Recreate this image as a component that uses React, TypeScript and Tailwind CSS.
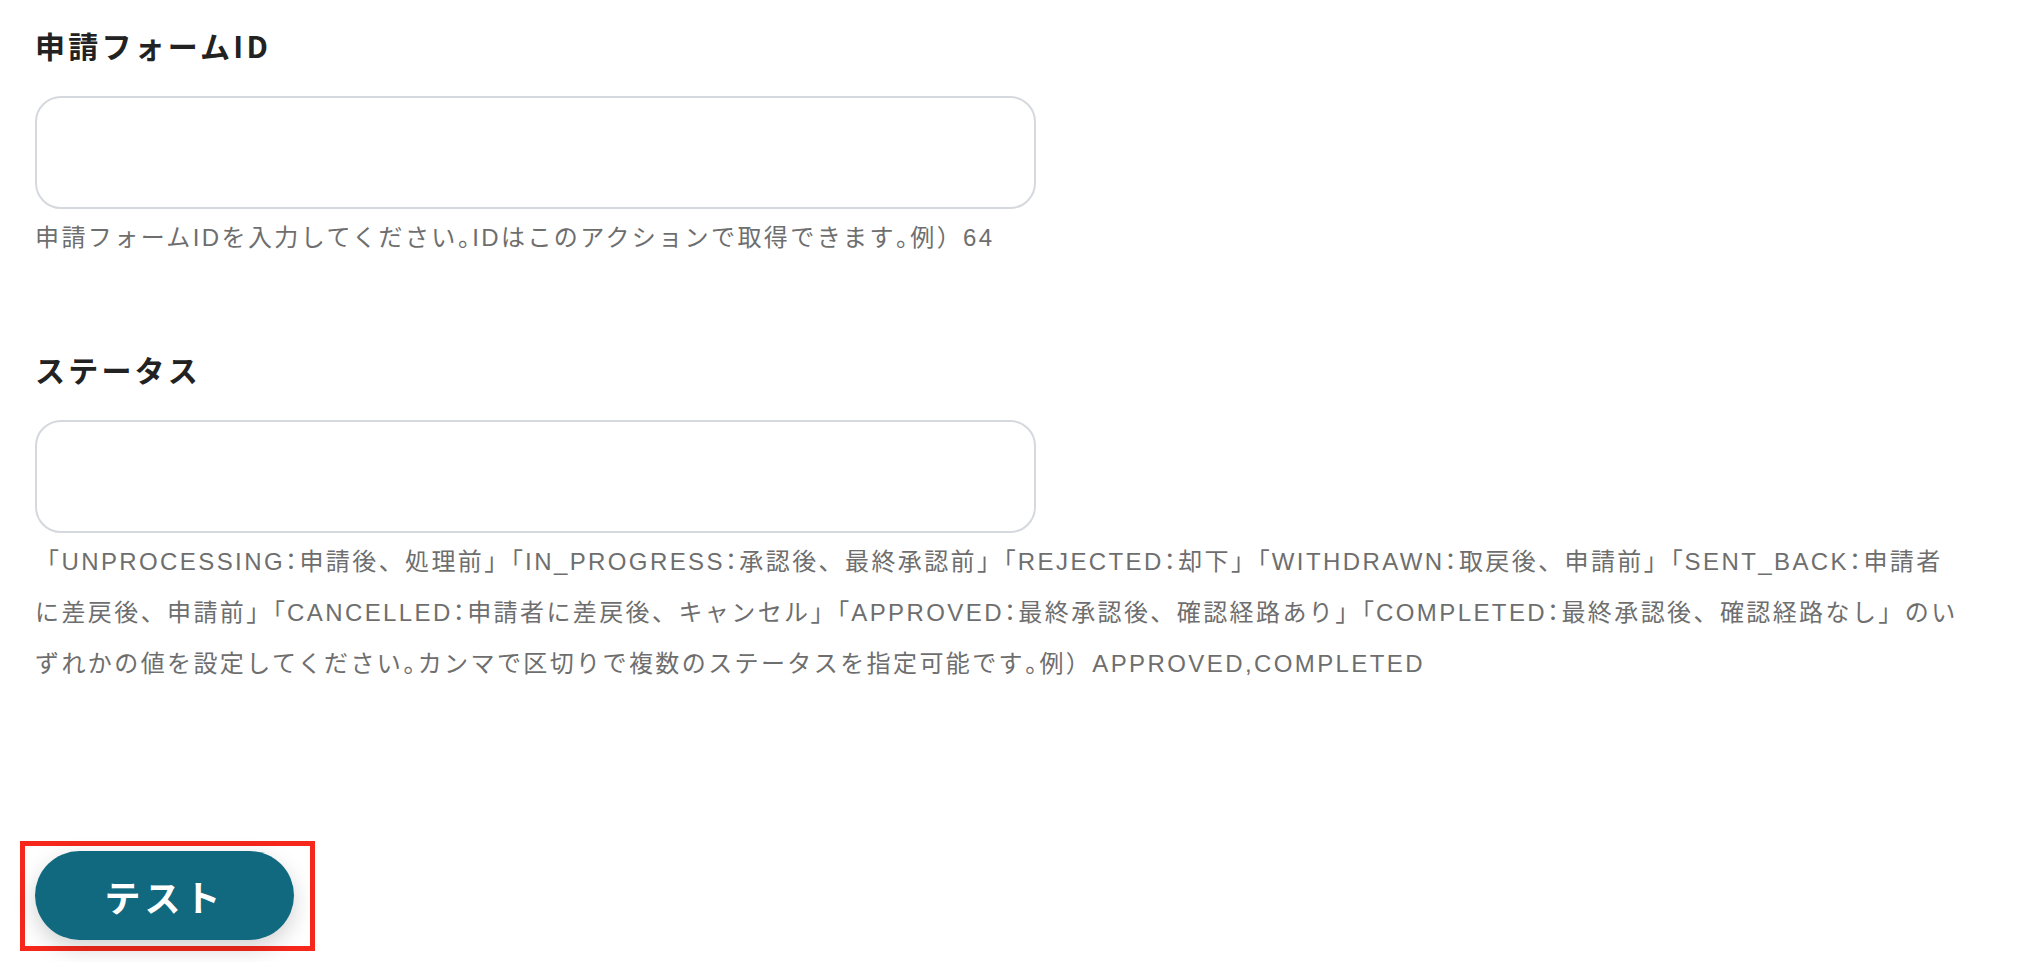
import React from 'react';

// the original page trims some full-width punctuation (colon, period, 」「 pairs) — use palt on those glyphs only
const Punct = ({ text }: { text: string }) => {
  const chars = Array.from(text);
  return (
    <>
      {chars.map((c, i) => {
        const trim = c === '：' || c === '。' || (c === '「' && chars[i - 1] === '」');
        return trim ? (
          <span key={i} className="[font-feature-settings:'palt']">
            {c}
          </span>
        ) : (
          <React.Fragment key={i}>{c}</React.Fragment>
        );
      })}
    </>
  );
};

const statusLines = [
  '「UNPROCESSING：申請後、処理前」「IN_PROGRESS：承認後、最終承認前」「REJECTED：却下」「WITHDRAWN：取戻後、申請前」「SENT_BACK：申請者',
  'に差戻後、申請前」「CANCELLED：申請者に差戻後、キャンセル」「APPROVED：最終承認後、確認経路あり」「COMPLETED：最終承認後、確認経路なし」のい',
  'ずれかの値を設定してください。カンマで区切りで複数のステータスを指定可能です。例）APPROVED,COMPLETED',
];

function Field({ label, lines, className }: { label: string; lines: string[]; className?: string }) {
  return (
    <div className={className}>
      <label className="block text-[30px] leading-[40px] font-semibold tracking-[3.2px] text-[#222] font-['Noto_Sans_CJK_JP',sans-serif]">
        {label}
      </label>
      <input
        type="text"
        className="mt-[31px] block w-[1001px] h-[113px] rounded-[26px] border-2 border-[#d5d9de] bg-white px-6 outline-none"
      />
      <p className="mt-[3px] whitespace-nowrap text-[24px] leading-[51px] tracking-[2.4px] text-[#6e6e6e] font-['Liberation_Sans','Noto_Sans_CJK_JP',sans-serif]">
        {lines.map((line, i) => (
          <React.Fragment key={i}>
            {i > 0 && <br />}
            <Punct text={line} />
          </React.Fragment>
        ))}
      </p>
    </div>
  );
}

export default function App() {
  return (
    <div className="min-h-[962px] w-[2042px] bg-white pl-[35px] pt-[25px]">
      <Field label="申請フォームID" lines={['申請フォームIDを入力してください。IDはこのアクションで取得できます。例）64']} />
      <Field label="ステータス" lines={statusLines} className="mt-[86px]" />

      <div className="mt-[152px] -ml-[15px] inline-block border-[5px] border-[#f5281b] pl-[10px] pr-[16px] pt-[5px] pb-[6px]">
        <button className="flex h-[89px] w-[259px] items-center justify-center rounded-full bg-[#10697f] text-[36px] font-bold tracking-[4px] text-white shadow-[0_8px_22px_rgba(0,0,0,0.18)] font-['Noto_Sans_CJK_JP',sans-serif]">
          テスト
        </button>
      </div>
    </div>
  );
}
